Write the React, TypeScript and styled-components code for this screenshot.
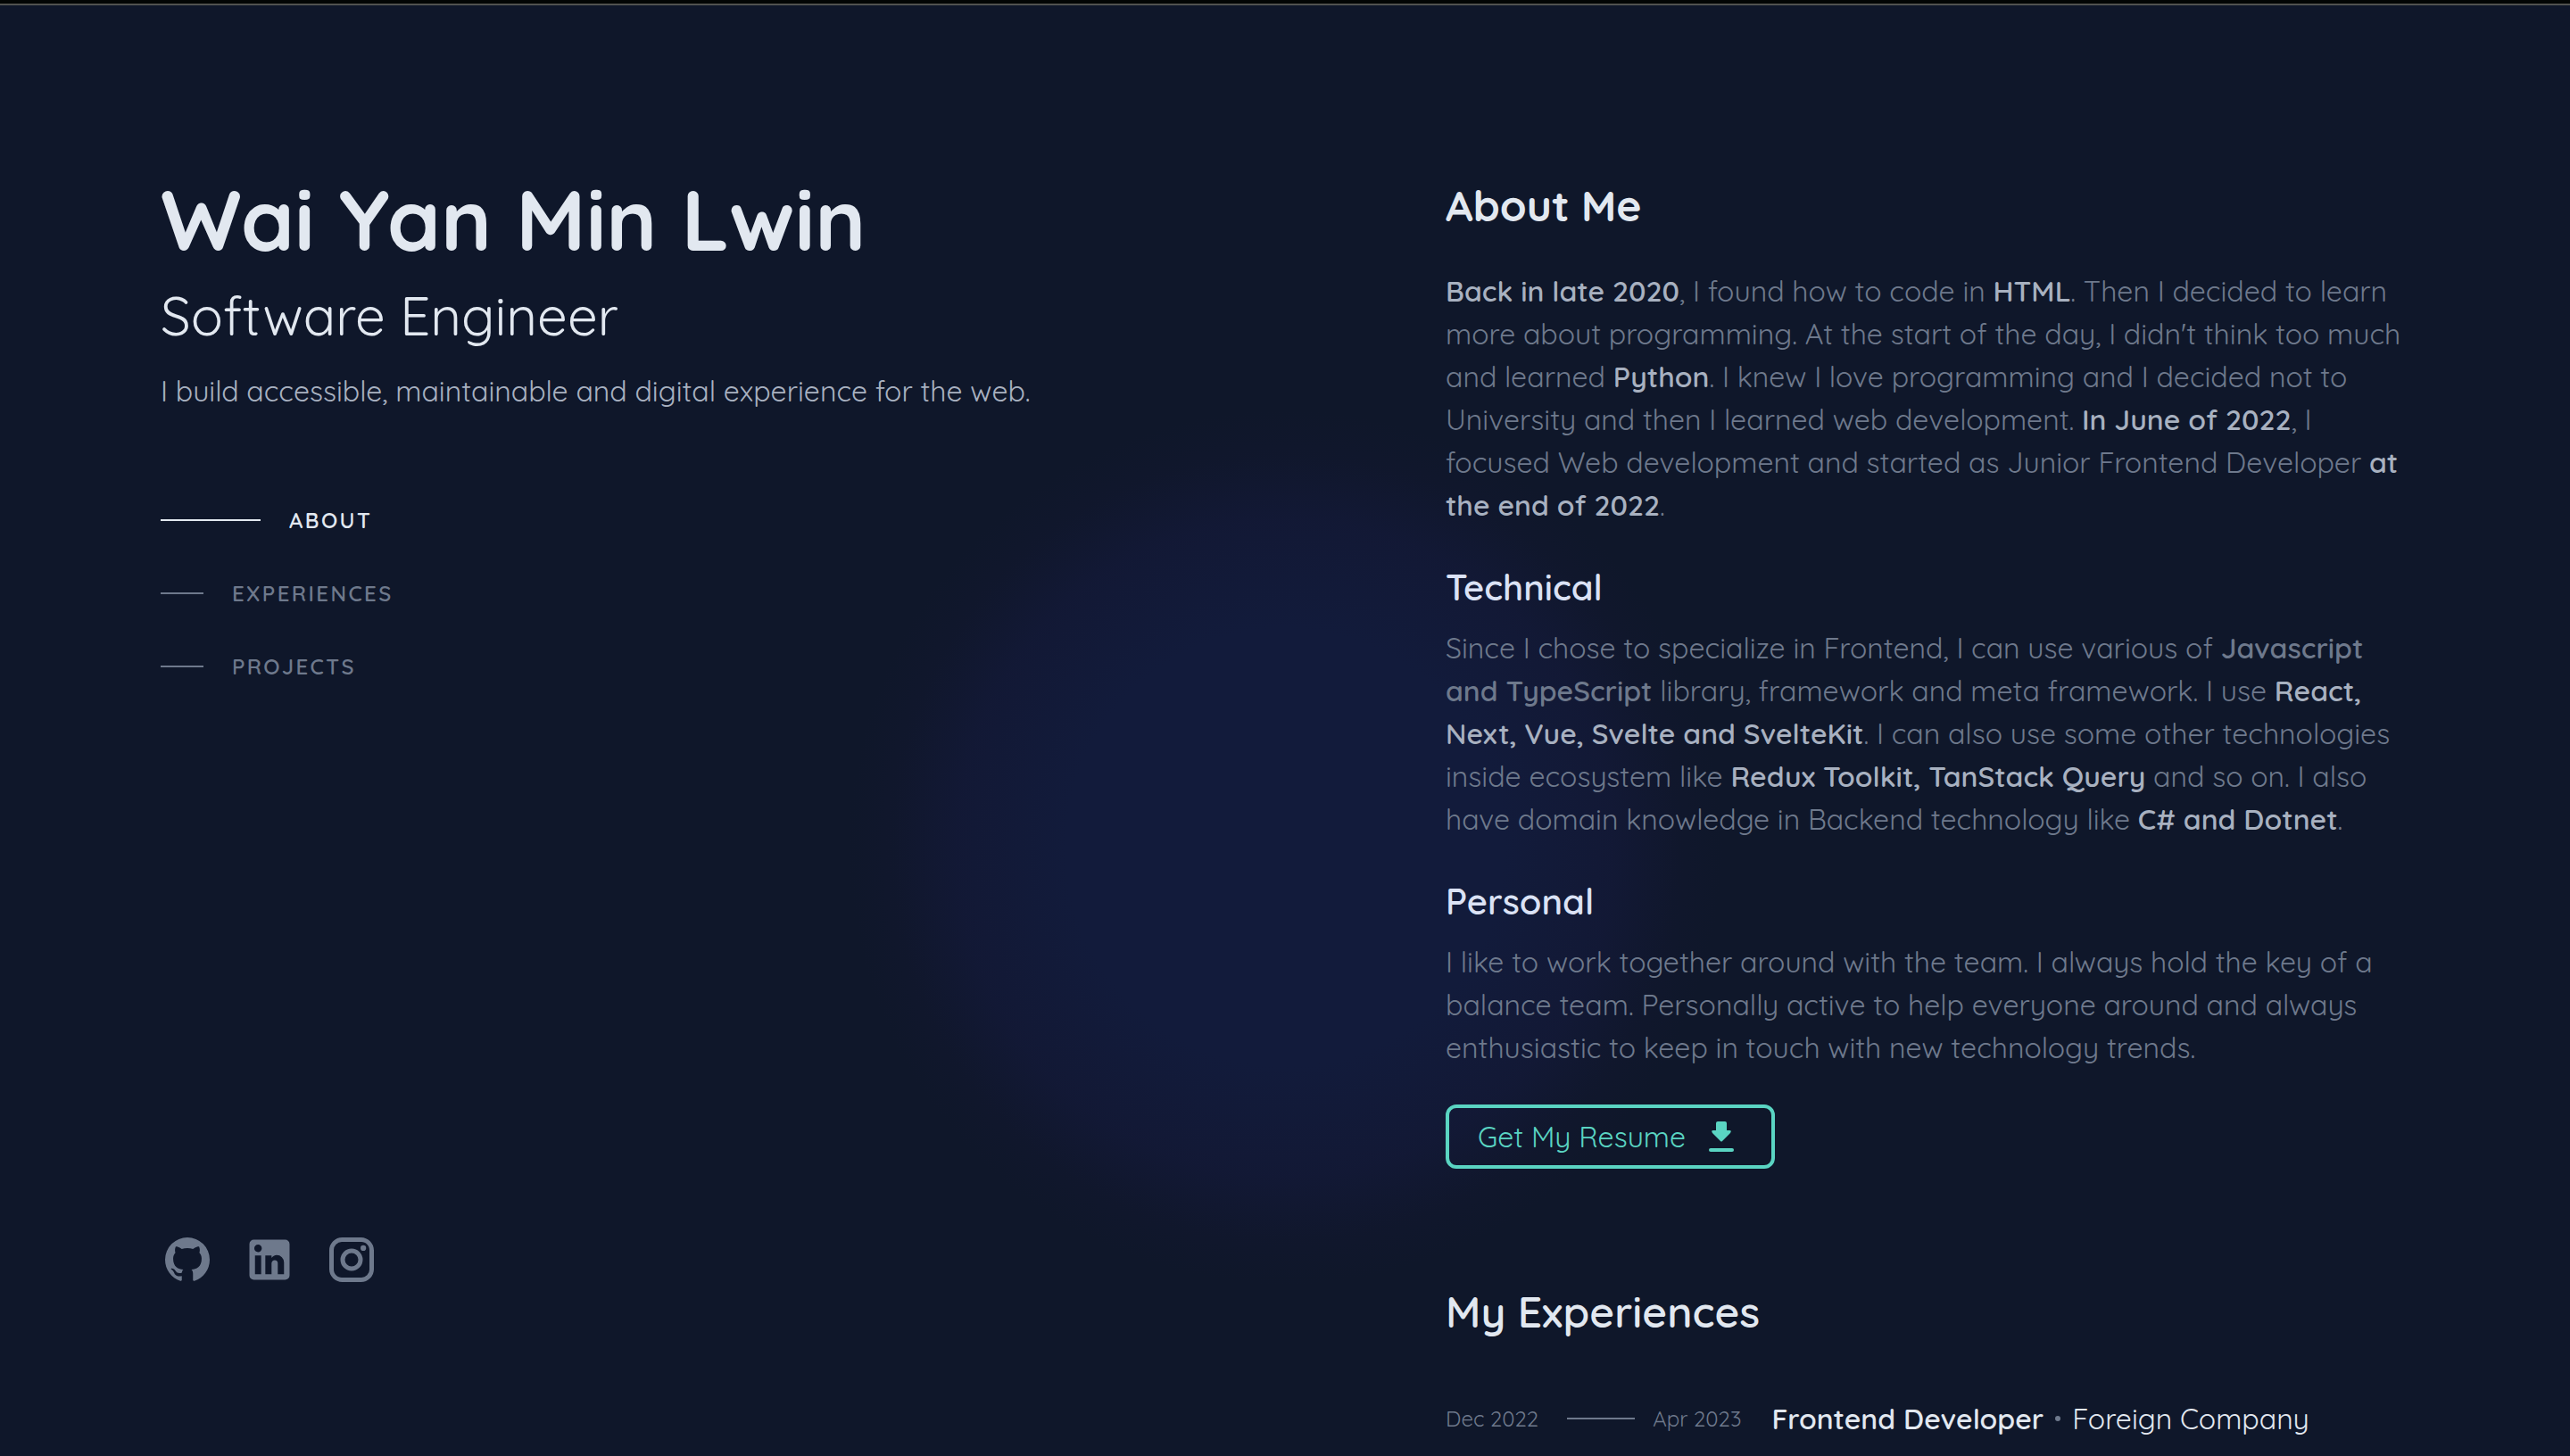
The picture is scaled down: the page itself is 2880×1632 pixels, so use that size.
import React from "react";
import styled, { createGlobalStyle } from "styled-components";

const GlobalStyle = createGlobalStyle`
  * { box-sizing: border-box; }
  html { background: #0f172a; }
  body {
    margin: 0;
    background: #0f172a;
    color: #6e798c;
    font-family: Quicksand, Lato, "Open Sans", sans-serif;
    font-size: 32px;
    line-height: 48px;
  }
  h1, h2, h3, p, ul { margin: 0; padding: 0; }
  ul { list-style: none; }
  a { color: inherit; text-decoration: none; }
`;

const Page = styled.div`
  position: relative;
  height: 100vh;
  overflow: hidden;
  border-top: 4px solid #020504;
  background: #0f172a;
`;

const Glow = styled.div`
  position: absolute;
  inset: 0;
  pointer-events: none;
  background: radial-gradient(
    circle 490px at 50% 946px,
    rgba(18, 27, 59, 1) 0%,
    rgba(18, 27, 59, 1) 50%,
    rgba(19, 25, 56, 0.8) 75%,
    rgba(18, 23, 48, 0.4) 90%,
    rgba(17, 23, 48, 0) 100%
  );
`;

const Layout = styled.div`
  position: relative;
  display: grid;
  grid-template-columns: 1fr 1fr;
  height: 100%;
  padding: 0 180px;
  border-top: 2px solid #50524f;
`;

const Sidebar = styled.header`
  display: flex;
  flex-direction: column;
  justify-content: space-between;
  height: 100%;
  padding: 191px 0 190px;
`;

const Name = styled.h1`
  color: #e2e8f0;
  font-size: 96px;
  line-height: 96px;
  font-weight: 700;
`;

const Role = styled.h2`
  margin-top: 25px;
  color: #e2e8f0;
  font-size: 60px;
  line-height: 72px;
  font-weight: 400;
`;

const Tagline = styled.p`
  margin-top: 24px;
  color: #a8b1c0;
`;

const NavList = styled.ul`
  display: flex;
  flex-direction: column;
  gap: 34px;
  margin-top: 97px;
`;

const NavLink = styled.a<{ $active?: boolean }>`
  display: flex;
  align-items: center;
  gap: 32px;
  color: ${(p) => (p.$active ? "#e2e8f0" : "#6e798c")};
  font-size: 24px;
  font-weight: 600;
  letter-spacing: 0.1em;
  text-transform: uppercase;

  &::before {
    content: "";
    width: ${(p) => (p.$active ? "112px" : "48px")};
    height: 2px;
    background: currentColor;
  }
`;

const Socials = styled.ul`
  display: flex;
  gap: 32px;
`;

const SocialLink = styled.a`
  display: block;
  color: #6e798c;

  svg { display: block; width: 60px; height: 60px; }
`;

const Main = styled.main`
  padding: 192px 0 0 180px;
`;

const SectionTitle = styled.h2<{ $bold?: boolean }>`
  color: #e2e8f0;
  font-size: 48px;
  line-height: 64px;
  font-weight: ${(p) => (p.$bold ? 700 : 600)};
`;

const SubTitle = styled.h3`
  margin: 40px 0 16px;
  color: #dbe2f5;
  font-size: 40px;
  line-height: 56px;
  font-weight: 600;
`;

const Intro = styled.p`
  margin-top: 40px;
`;

const Strong = styled.strong<{ $muted?: boolean }>`
  color: ${(p) => (p.$muted ? "inherit" : "#a8b1c0")};
  font-weight: 600;
`;

const ResumeLink = styled.a`
  display: inline-flex;
  align-items: center;
  gap: 24px;
  height: 72px;
  margin-top: 40px;
  padding: 0 40px 0 32px;
  border: 4px solid #5ad4c2;
  border-radius: 12px;
  color: #5ad4c2;

  svg { width: 32px; height: 40px; }
`;

const Experience = styled.section`
  margin-top: 128px;
`;

const Job = styled.div`
  display: flex;
  align-items: center;
  margin-top: 64px;
  white-space: nowrap;
`;

const Period = styled.div`
  display: flex;
  align-items: center;
  margin-right: 34px;
  font-size: 24px;
`;

const Dash = styled.span`
  width: 76px;
  height: 2px;
  margin: 0 20px 0 32px;
  background: #6e798c;
`;

const JobTitle = styled.div`
  display: flex;
  align-items: center;
  gap: 13px;
  color: #e2e8f0;

  strong { font-weight: 600; }
`;

const Dot = styled.span`
  width: 6px;
  height: 6px;
  border-radius: 50%;
  background: #6e798c;
`;

const icons = {
  GitHub:
    "M12,2A10,10 0 0,0 2,12C2,16.42 4.87,20.17 8.84,21.5C9.34,21.58 9.5,21.27 9.5,21C9.5,20.77 9.5,20.14 9.5,19.31C6.73,19.91 6.14,17.97 6.14,17.97C5.68,16.81 5.03,16.5 5.03,16.5C4.12,15.88 5.1,15.9 5.1,15.9C6.1,15.97 6.63,16.93 6.63,16.93C7.5,18.45 8.97,18 9.54,17.76C9.63,17.11 9.89,16.67 10.17,16.42C7.95,16.17 5.62,15.31 5.62,11.5C5.62,10.39 6,9.5 6.65,8.79C6.55,8.54 6.2,7.5 6.75,6.15C6.75,6.15 7.59,5.88 9.5,7.17C10.29,6.95 11.15,6.84 12,6.84C12.85,6.84 13.71,6.95 14.5,7.17C16.41,5.88 17.25,6.15 17.25,6.15C17.8,7.5 17.45,8.54 17.35,8.79C18,9.5 18.38,10.39 18.38,11.5C18.38,15.32 16.04,16.16 13.81,16.41C14.17,16.72 14.5,17.33 14.5,18.26C14.5,19.6 14.5,20.68 14.5,21C14.5,21.27 14.66,21.59 15.17,21.5C19.14,20.16 22,16.42 22,12A10,10 0 0,0 12,2Z",
  LinkedIn:
    "M19 3A2 2 0 0 1 21 5V19A2 2 0 0 1 19 21H5A2 2 0 0 1 3 19V5A2 2 0 0 1 5 3H19M18.5 18.5V13.2A3.26 3.26 0 0 0 15.24 9.94C14.39 9.94 13.4 10.46 12.92 11.24V10.13H10.13V18.5H12.92V13.57C12.92 12.8 13.54 12.17 14.31 12.17A1.4 1.4 0 0 1 15.71 13.57V18.5H18.5M6.88 8.56A1.68 1.68 0 0 0 8.56 6.88C8.56 5.95 7.81 5.19 6.88 5.19A1.69 1.69 0 0 0 5.19 6.88C5.19 7.81 5.95 8.56 6.88 8.56M8.27 18.5V10.13H5.5V18.5H8.27Z",
  Instagram:
    "M7.8,2H16.2C19.4,2 22,4.6 22,7.8V16.2A5.8,5.8 0 0,1 16.2,22H7.8C4.6,22 2,19.4 2,16.2V7.8A5.8,5.8 0 0,1 7.8,2M7.6,4A3.6,3.6 0 0,0 4,7.6V16.4C4,18.39 5.61,20 7.6,20H16.4A3.6,3.6 0 0,0 20,16.4V7.6C20,5.61 18.39,4 16.4,4H7.6M17.25,5.5A1.25,1.25 0 0,1 18.5,6.75A1.25,1.25 0 0,1 17.25,8A1.25,1.25 0 0,1 16,6.75A1.25,1.25 0 0,1 17.25,5.5M12,7A5,5 0 0,1 17,12A5,5 0 0,1 12,17A5,5 0 0,1 7,12A5,5 0 0,1 12,7M12,9A3,3 0 0,0 9,12A3,3 0 0,0 12,15A3,3 0 0,0 15,12A3,3 0 0,0 12,9Z",
};

const links = ["About", "Experiences", "Projects"];

export default function App() {
  return (
    <>
      <GlobalStyle />
      <Page>
        <Glow />
        <Layout>
          <Sidebar>
            <div>
              <Name>Wai Yan Min Lwin</Name>
              <Role>Software Engineer</Role>
              <Tagline>I build accessible, maintainable and digital experience for the web.</Tagline>
              <nav aria-label="Sections">
                <NavList>
                  {links.map((label, i) => (
                    <li key={label}>
                      <NavLink href={`#${label.toLowerCase()}`} $active={i === 0}>
                        {label}
                      </NavLink>
                    </li>
                  ))}
                </NavList>
              </nav>
            </div>
            <Socials>
              {Object.entries(icons).map(([name, path]) => (
                <li key={name}>
                  <SocialLink href={`#${name.toLowerCase()}`} aria-label={name}>
                    <svg viewBox="0 0 24 24" fill="currentColor" aria-hidden="true">
                      <path d={path} />
                    </svg>
                  </SocialLink>
                </li>
              ))}
            </Socials>
          </Sidebar>

          <Main>
            <section id="about">
              <SectionTitle $bold>About Me</SectionTitle>
              <Intro>
                <Strong>Back in late 2020</Strong>, I found how to code in <Strong>HTML</Strong>. Then I decided to learn
                <br />
                more about programming. At the start of the day, I didn't think too much
                <br />
                and learned <Strong>Python</Strong>. I knew I love programming and I decided not to
                <br />
                University and then I learned web development. <Strong>In June of 2022</Strong>, I
                <br />
                focused Web development and started as Junior Frontend Developer <Strong>at</Strong>
                <br />
                <Strong>the end of 2022</Strong>.
              </Intro>

              <SubTitle>Technical</SubTitle>
              <p>
                Since I chose to specialize in Frontend, I can use various of <Strong $muted>Javascript</Strong>
                <br />
                <Strong $muted>and TypeScript</Strong> library, framework and meta framework. I use <Strong>React,</Strong>
                <br />
                <Strong>Next, Vue, Svelte and SvelteKit</Strong>. I can also use some other technologies
                <br />
                inside ecosystem like <Strong>Redux Toolkit, TanStack Query</Strong> and so on. I also
                <br />
                have domain knowledge in Backend technology like <Strong>C# and Dotnet</Strong>.
              </p>

              <SubTitle>Personal</SubTitle>
              <p>
                I like to work together around with the team. I always hold the key of a
                <br />
                balance team. Personally active to help everyone around and always
                <br />
                enthusiastic to keep in touch with new technology trends.
              </p>

              <ResumeLink href="#resume">
                Get My Resume
                <svg viewBox="0 0 32 40" fill="currentColor" aria-hidden="true">
                  <path d="M12 3h8q2 0 2 2v8h3q3 0 1 3l-9 9q-1 1-2 0l-9-9q-2-3 1-3h3V5q0-2 2-2Z" />
                  <rect x="2" y="33" width="28" height="4" rx="2" />
                </svg>
              </ResumeLink>
            </section>

            <Experience id="experiences">
              <SectionTitle>My Experiences</SectionTitle>
              <Job>
                <Period>
                  <span>Dec 2022</span>
                  <Dash />
                  <span>Apr 2023</span>
                </Period>
                <JobTitle>
                  <strong>Frontend Developer</strong>
                  <Dot />
                  <span>Foreign Company</span>
                </JobTitle>
              </Job>
            </Experience>
          </Main>
        </Layout>
      </Page>
    </>
  );
}
